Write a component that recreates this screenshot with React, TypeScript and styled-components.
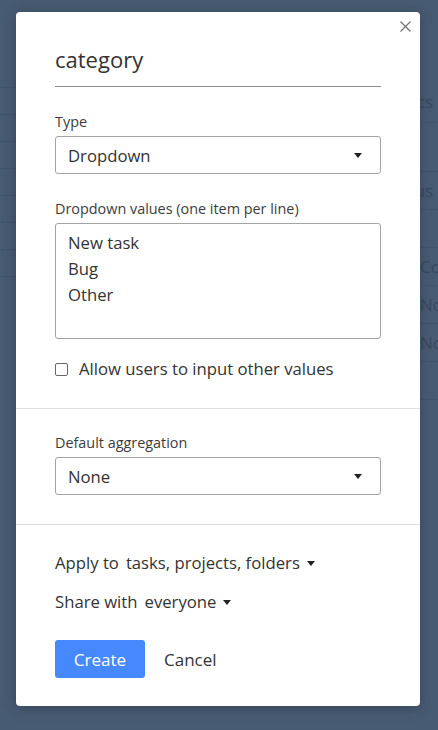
import { FC } from 'react';

import styled, { createGlobalStyle } from 'styled-components';

const GlobalStyle = createGlobalStyle`
  html, body {
    margin: 0;
    padding: 0;
    height: 730px;
    overflow: hidden;
    background: #475b73;
  }
  body {
    font-family: 'Open Sans', 'Liberation Sans', sans-serif;
    color: #333333;
  }
  * {
    box-sizing: border-box;
  }
`;

const Page = styled.div`
  position: relative;
  width: 438px;
  height: 730px;
  overflow: hidden;
  display: grid;
  grid-template-columns: 16px 1fr;
`;

const Sidebar = styled.div`
  padding-top: 61px;
  display: flex;
  flex-direction: column;
`;

const SidebarRow = styled.div`
  height: 27px;
  border-bottom: 1px solid #42556c;
`;

const Table = styled.div`
  display: flex;
  flex-direction: column;
  padding-top: 80px;
`;

const TableRow = styled.div<{ $height: number }>`
  height: ${(p) => p.$height}px;
  display: grid;
  grid-template-columns: 404px 13px 1fr;
  align-items: center;
  border-bottom: 1px solid #42556c;
  font-size: 17px;
  color: #384a5f;
  white-space: nowrap;
`;

const HeaderCell = styled.span`
  grid-column: 1 / 3;
  text-align: right;
  overflow: hidden;
`;

const ValueCell = styled.span`
  grid-column: 2 / 4;
  overflow: hidden;
`;

const Overlay = styled.div`
  position: absolute;
  top: 12px;
  left: 16px;
  width: 404px;
  height: 694px;
  background: #ffffff;
  border-radius: 4px;
  box-shadow: 0 2px 14px rgba(0, 0, 0, 0.25);
  display: flex;
  flex-direction: column;
`;

const CloseButton = styled.button`
  position: absolute;
  top: 9px;
  right: 9px;
  width: 11px;
  height: 11px;
  padding: 0;
  border: none;
  background: none;
  display: flex;
  cursor: pointer;
`;

const Section = styled.div<{ $top: number; $bottom: number; $divider?: boolean }>`
  padding: ${(p) => p.$top}px 39px ${(p) => p.$bottom}px;
  border-bottom: ${(p) => (p.$divider ? '1px solid #dddddd' : 'none')};
  display: flex;
  flex-direction: column;
`;

const Title = styled.div`
  font-size: 22px;
  line-height: 30px;
  color: #333333;
  padding-bottom: 12px;
  border-bottom: 1px solid #8c8c8c;
  margin-bottom: 26px;
`;

const Field = styled.div`
  display: flex;
  flex-direction: column;
  margin-bottom: 26px;

  &:last-child {
    margin-bottom: 0;
  }
`;

const Label = styled.div`
  font-size: 14.4px;
  line-height: 18px;
  color: #3c3c3c;
  margin-bottom: 5px;
  white-space: nowrap;
`;

const Select = styled.div`
  height: 38px;
  border: 1px solid #a3a3a3;
  border-radius: 3px;
  padding: 0 18px 0 12px;
  display: flex;
  align-items: center;
  justify-content: space-between;
  font-size: 16.7px;
  color: #333333;
`;

const Caret = styled.span`
  width: 0;
  height: 0;
  border-left: 4px solid transparent;
  border-right: 4px solid transparent;
  border-top: 5px solid #222222;
`;

const TextArea = styled.div`
  height: 116px;
  border: 1px solid #a3a3a3;
  border-radius: 3px;
  padding: 6px 12px;
  font-size: 16.7px;
  line-height: 26px;
  color: #333333;
`;

const CheckRow = styled.label`
  margin-top: 20px;
  display: flex;
  align-items: center;
  gap: 11px;
  font-size: 16.7px;
  line-height: 20px;
  color: #333333;
  white-space: nowrap;
`;

const Checkbox = styled.span`
  width: 13px;
  height: 13px;
  flex: none;
  border: 1px solid #666666;
  border-radius: 2px;
  background: #ffffff;
`;

const Option = styled.div`
  display: flex;
  align-items: center;
  gap: 7px;
  font-size: 16.7px;
  line-height: 20px;
  color: #333333;
  margin-bottom: 19px;
  white-space: nowrap;
`;

const Actions = styled.div`
  margin-top: 9px;
  display: flex;
  align-items: center;
  gap: 19px;
`;

const PrimaryButton = styled.button`
  width: 90px;
  height: 38px;
  border: none;
  border-radius: 3px;
  background: #4689ff;
  color: #ffffff;
  font-family: inherit;
  font-size: 17px;
  padding: 0;
`;

const LinkButton = styled.button`
  border: none;
  background: none;
  padding: 0;
  font-family: inherit;
  font-size: 17px;
  color: #333333;
`;

const tableRows = [
  { height: 43, header: 'Metrics', value: '' },
  { height: 49, header: '', value: '' },
  { height: 38, header: 'Status', value: '' },
  { height: 38, header: '', value: '' },
  { height: 38, header: '', value: 'Completed' },
  { height: 38, header: '', value: 'None' },
  { height: 38, header: '', value: 'None' },
  { height: 38, header: '', value: '' },
];

const App: FC = () => {
  return (
    <>
      <GlobalStyle />
      <Page>
        <Sidebar>
          {Array.from({ length: 8 }).map((_, i) => (
            <SidebarRow key={i} />
          ))}
        </Sidebar>
        <Table>
          {tableRows.map((row, i) => (
            <TableRow key={i} $height={row.height}>
              {row.header && <HeaderCell>{row.header}</HeaderCell>}
              {row.value && <ValueCell>{row.value}</ValueCell>}
            </TableRow>
          ))}
        </Table>

        <Overlay>
          <CloseButton aria-label="Close">
            <svg width="11" height="11" viewBox="0 0 11 11">
              <path
                d="M0.5 0.5L10.5 10.5M10.5 0.5L0.5 10.5"
                stroke="#707070"
                strokeWidth="1.2"
                fill="none"
              />
            </svg>
          </CloseButton>

          <Section $top={32} $bottom={29} $divider>
            <Title>category</Title>
            <Field>
              <Label>Type</Label>
              <Select>
                <span>Dropdown</span>
                <Caret />
              </Select>
            </Field>
            <Field>
              <Label>Dropdown values (one item per line)</Label>
              <TextArea>
                <div>New task</div>
                <div>Bug</div>
                <div>Other</div>
              </TextArea>
              <CheckRow>
                <Checkbox />
                <span>Allow users to input other values</span>
              </CheckRow>
            </Field>
          </Section>

          <Section $top={25} $bottom={29} $divider>
            <Field>
              <Label>Default aggregation</Label>
              <Select>
                <span>None</span>
                <Caret />
              </Select>
            </Field>
          </Section>

          <Section $top={28} $bottom={28}>
            <Option>
              <span>Apply to</span>
              <span>tasks, projects, folders</span>
              <Caret />
            </Option>
            <Option>
              <span>Share with</span>
              <span>everyone</span>
              <Caret />
            </Option>
            <Actions>
              <PrimaryButton>Create</PrimaryButton>
              <LinkButton>Cancel</LinkButton>
            </Actions>
          </Section>
        </Overlay>
      </Page>
    </>
  );
};

export default App;
